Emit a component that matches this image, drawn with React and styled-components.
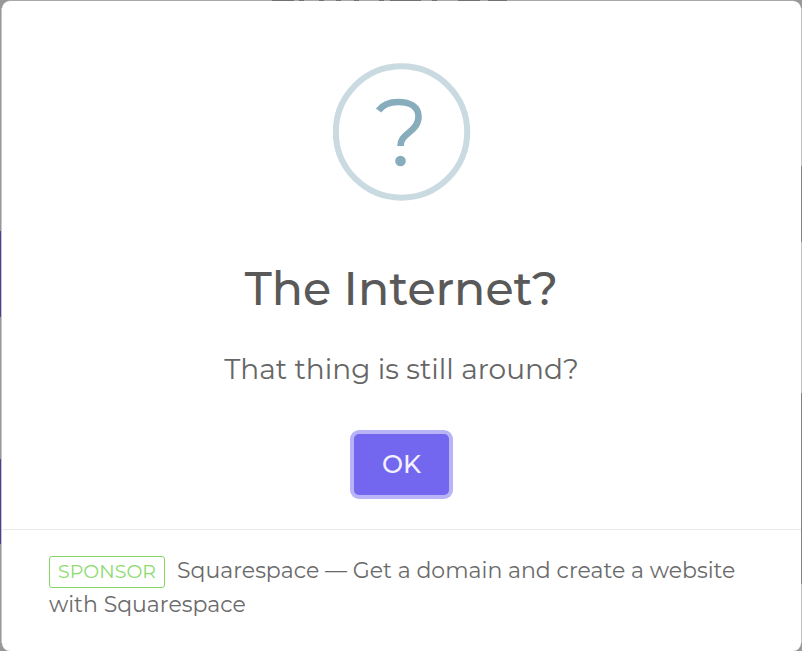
import React from "react";
import styled, { createGlobalStyle } from "styled-components";

const GlobalStyle = createGlobalStyle`
  * { box-sizing: border-box; }
  body {
    margin: 0;
    background: #98979a;
    color: #545454;
    font-family: Montserrat, Inter, "Open Sans", sans-serif;
  }
`;

const Backdrop = styled.main`
  display: grid;
  min-height: 100vh;
  padding: 1px 1px 0 2px;
  background:
    linear-gradient(#737072, #737072) 272px 0 / 22px 1px no-repeat,
    linear-gradient(#737072, #737072) 299px 0 / 5px 1px no-repeat,
    linear-gradient(#737072, #737072) 319px 0 / 5px 1px no-repeat,
    linear-gradient(#737072, #737072) 336px 0 / 5px 1px no-repeat,
    linear-gradient(#737072, #737072) 354px 0 / 5px 1px no-repeat,
    linear-gradient(#737072, #737072) 379px 0 / 5px 1px no-repeat,
    linear-gradient(#737072, #737072) 390px 0 / 31px 1px no-repeat,
    linear-gradient(#737072, #737072) 432px 0 / 5px 1px no-repeat,
    linear-gradient(#737072, #737072) 458px 0 / 22px 1px no-repeat,
    linear-gradient(#737072, #737072) 488px 0 / 19px 1px no-repeat,
    linear-gradient(#a8a7a9, #a8a7a9) 8px 0 / calc(100% - 16px) 1px no-repeat,
    linear-gradient(#4a3f97, #4a3f97) 0 231px / 1px 86px no-repeat,
    linear-gradient(#4a3f97, #4a3f97) 0 459px / 1px 85px no-repeat,
    linear-gradient(#838383, #838383) 100% 166px / 1px 76px no-repeat,
    linear-gradient(#838383, #838383) 100% 393px / 1px 191px no-repeat,
    linear-gradient(#c0c0c0, #c0c0c0) 100% 8px / 1px 635px no-repeat,
    linear-gradient(#c8c7ca, #c8c7ca) 1px 8px / 1px 635px no-repeat,
    #98979a;
`;

const Dialog = styled.section`
  display: flex;
  flex-direction: column;
  align-items: center;
  padding-top: 62px;
  background: #fff;
  border-radius: 8px;
`;

const QuestionIcon = styled.svg`
  display: block;
  width: 138px;
  height: 138px;
`;

const Title = styled.h1`
  margin: 56px 0 0;
  color: #595959;
  font-size: 46px;
  font-weight: 500;
  line-height: 64px;
`;

const Message = styled.p`
  margin: 32px 0 0;
  font-size: 28px;
  font-weight: 400;
  line-height: 32px;
  color: #666;
`;

const ConfirmButton = styled.button`
  margin-top: 49px;
  padding: 0 28px;
  border: 0;
  border-radius: 5px;
  background: #7367ef;
  box-shadow: 0 0 0 4px #b9b3f7;
  color: #f3f1fe;
  font-family: inherit;
  font-size: 25px;
  font-weight: 500;
  line-height: 61px;
`;

const Footer = styled.footer`
  align-self: stretch;
  margin-top: 34px;
  padding: 24px 47px 28px;
  border-top: 1px solid #eaeaea;
  color: #6a6a6a;
  font-size: 22px;
  font-weight: 400;
  line-height: 33px;
`;

const SponsorBadge = styled.span`
  display: inline-block;
  margin-right: 12px;
  padding: 0 8px;
  border: 1px solid #83d564;
  border-radius: 3px;
  color: #8ddb70;
  font-size: 19px;
  font-weight: 400;
  line-height: 30px;
`;

export default function App() {
  return (
    <>
      <GlobalStyle />
      <Backdrop>
        <Dialog role="dialog" aria-labelledby="title" aria-describedby="message">
          <QuestionIcon viewBox="0 0 138 138" fill="none" aria-hidden="true">
            <circle cx="68.500" cy="69" r="65.700" stroke="#c9dae1" strokeWidth="6" />
            <path
              d="M45.500 47.500C50 41.500 56.500 39 65 39C77.500 39 85.500 44 85.500 53.500C85.500 61 81.500 65 76 69.500C70.500 74 67.500 77 67.500 83"
              stroke="#87adbd"
              strokeWidth="6.600"
            />
            <circle cx="67.500" cy="98" r="5.300" fill="#87adbd" />
          </QuestionIcon>
          <Title id="title">The Internet?</Title>
          <Message id="message">That thing is still around?</Message>
          <ConfirmButton type="button">OK</ConfirmButton>
          <Footer>
            <SponsorBadge>SPONSOR</SponsorBadge>
            Squarespace — Get a domain and create a website with Squarespace
          </Footer>
        </Dialog>
      </Backdrop>
    </>
  );
}
